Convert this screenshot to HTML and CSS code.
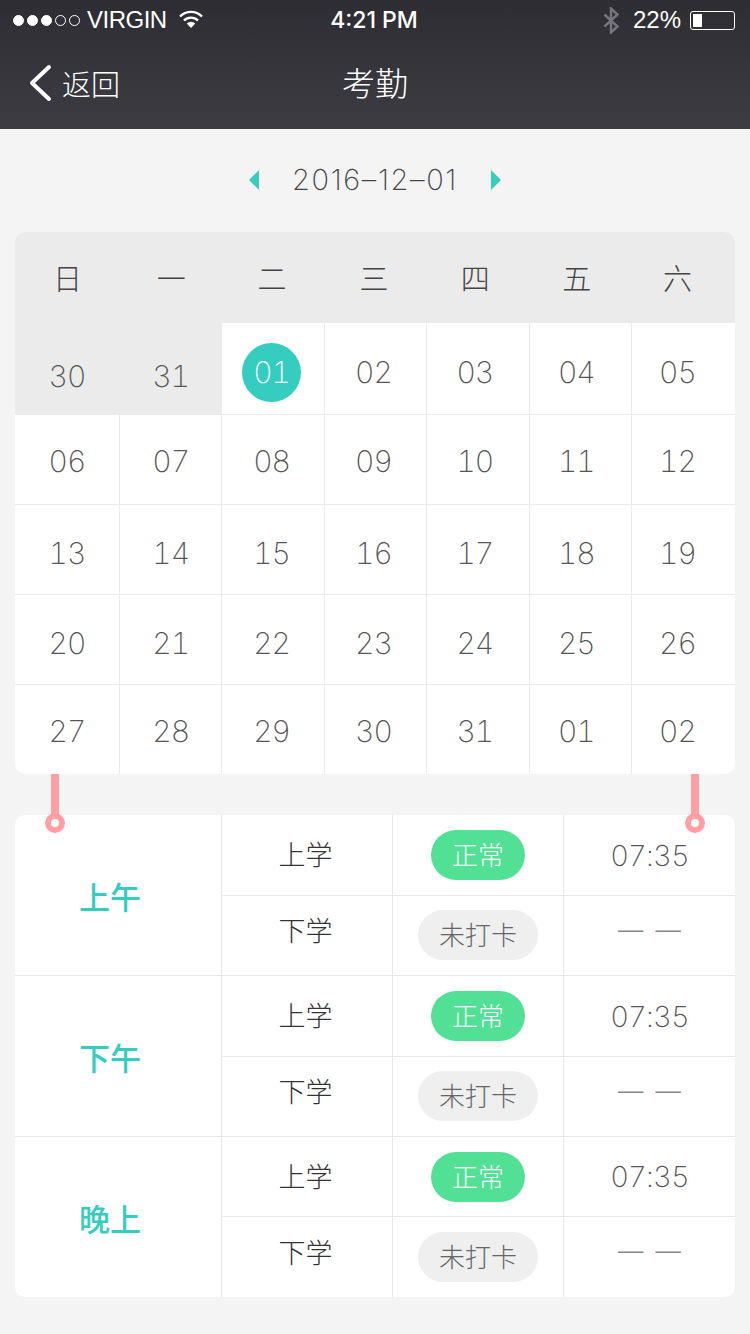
FILE: index.html
```html
<!DOCTYPE html>
<html lang="zh-CN">
<head>
    <meta charset="UTF-8">
    <meta name="viewport" content="width=device-width, initial-scale=1.0">
    <title>考勤</title>
    <link rel="stylesheet" href="styles.css">
</head>

<body>
    <header class="topbar">
        <div class="status">
            <div class="status-left">
                <span class="dot on"></span><span class="dot on"></span><span class="dot on"></span><span class="dot"></span><span class="dot"></span>
                <span class="carrier">VIRGIN</span>
                <svg class="wifi" width="24" height="18" viewBox="0 0 24 18">
                    <path d="M1 6.5a15.5 15.5 0 0 1 22 0" fill="none" stroke="#fff" stroke-width="2.4"/>
                    <path d="M5 10.5a10 10 0 0 1 14 0" fill="none" stroke="#fff" stroke-width="2.4"/>
                    <path d="M12 18l-4.2-4.6a6 6 0 0 1 8.4 0z" fill="#fff"/>
                </svg>
            </div>
            <div class="status-time">4:21 PM</div>
            <div class="status-right">
                <svg class="bluetooth" width="16" height="27" viewBox="0 0 16 27">
                    <path d="M1.5 7.5l13 12-6.5 6V1.5l6.5 6-13 12" fill="none" stroke="#77777b" stroke-width="2.4"/>
                </svg>
                <span class="percent">22%</span>
                <div class="battery"><div class="battery-level"></div></div>
            </div>
        </div>
        <div class="navbar">
            <div class="back">
                <svg width="24" height="38" viewBox="0 0 24 38">
                    <path d="M21 3L4 19l17 16" fill="none" stroke="#fff" stroke-width="4" stroke-linecap="round" stroke-linejoin="round"/>
                </svg>
                <span>返回</span>
            </div>
            <h1>考勤</h1>
        </div>
    </header>

    <main class="content">
        <div class="datepick">
            <span class="arrow arrow-left"></span>
            <span class="date">2016–12–01</span>
            <span class="arrow arrow-right"></span>
        </div>

        <section class="calendar">
            <div class="cal-head">
                <div>日</div><div>一</div><div>二</div><div>三</div><div>四</div><div>五</div><div>六</div>
            </div>
            <div class="cal-row first">
                <div class="day other">30</div>
                <div class="day other">31</div>
                <div class="day"><span class="today">01</span></div>
                <div class="day">02</div>
                <div class="day">03</div>
                <div class="day">04</div>
                <div class="day">05</div>
            </div>
            <div class="cal-row r2">
                <div class="day">06</div><div class="day">07</div><div class="day">08</div><div class="day">09</div><div class="day">10</div><div class="day">11</div><div class="day">12</div>
            </div>
            <div class="cal-row r3">
                <div class="day">13</div><div class="day">14</div><div class="day">15</div><div class="day">16</div><div class="day">17</div><div class="day">18</div><div class="day">19</div>
            </div>
            <div class="cal-row r3">
                <div class="day">20</div><div class="day">21</div><div class="day">22</div><div class="day">23</div><div class="day">24</div><div class="day">25</div><div class="day">26</div>
            </div>
            <div class="cal-row last">
                <div class="day">27</div><div class="day">28</div><div class="day">29</div><div class="day">30</div><div class="day">31</div><div class="day">01</div><div class="day">02</div>
            </div>
        </section>

        <section class="records">
            <span class="pin pin-left"></span>
            <span class="pin pin-right"></span>

            <div class="period">
                <div class="period-name">上午</div>
                <div class="entry upper">
                    <div class="kind">上学</div>
                    <div class="state"><span class="tag ok">正常</span></div>
                    <div class="clock">07:35</div>
                </div>
                <div class="entry lower">
                    <div class="kind">下学</div>
                    <div class="state"><span class="tag miss">未打卡</span></div>
                    <div class="clock none">— —</div>
                </div>
            </div>

            <div class="period">
                <div class="period-name">下午</div>
                <div class="entry upper">
                    <div class="kind">上学</div>
                    <div class="state"><span class="tag ok">正常</span></div>
                    <div class="clock">07:35</div>
                </div>
                <div class="entry lower">
                    <div class="kind">下学</div>
                    <div class="state"><span class="tag miss">未打卡</span></div>
                    <div class="clock none">— —</div>
                </div>
            </div>

            <div class="period">
                <div class="period-name">晚上</div>
                <div class="entry upper">
                    <div class="kind">上学</div>
                    <div class="state"><span class="tag ok">正常</span></div>
                    <div class="clock">07:35</div>
                </div>
                <div class="entry lower">
                    <div class="kind">下学</div>
                    <div class="state"><span class="tag miss">未打卡</span></div>
                    <div class="clock none">— —</div>
                </div>
            </div>
        </section>
    </main>
</body>

</html>
```

FILE: styles.css
```css
*, *::after {
    box-sizing: border-box;
}

html, body {
    margin: 0;
    padding: 0;
}

body {
    width: 750px;
    height: 1334px;
    overflow: hidden;
    background-color: #f4f4f4;
    font-family: "Liberation Sans", "Noto Sans CJK SC", sans-serif;
}

/* top bar */
.topbar {
    height: 129px;
    background: linear-gradient(#2e2d33, #3d3c42);
    color: #fff;
}

.status {
    height: 40px;
    padding: 0 15px 0 13px;
    display: grid;
    grid-template-columns: 1fr auto 1fr;
    align-items: center;
    font-size: 24px;
}

.status-left {
    display: flex;
    align-items: center;
    gap: 3px;
}

.dot {
    width: 11px;
    height: 11px;
    border-radius: 50%;
    border: 1px solid #fff;
}

.dot.on {
    background-color: #fff;
}

.carrier {
    margin-left: 4px;
    margin-right: 9px;
    letter-spacing: -0.5px;
}

.wifi {
    margin-top: -2px;
}

.status-time {
    font-family: Inter, sans-serif;
    font-weight: 500;
    font-size: 23px;
}

.status-right {
    display: flex;
    align-items: center;
    justify-content: flex-end;
}

.percent {
    margin-left: 14px;
    margin-right: 9px;
}

.battery {
    width: 45px;
    height: 19px;
    padding: 2px;
    border: 1px solid #fff;
    border-radius: 3px;
}

.battery-level {
    width: 9px;
    height: 100%;
    background-color: #fff;
}

.navbar {
    height: 89px;
    display: flex;
    align-items: center;
    justify-content: center;
    position: relative;
}

.back {
    position: absolute;
    left: 28px;
    top: 22px;
    display: flex;
    align-items: center;
    gap: 10px;
    font-size: 29px;
    font-weight: 300;
}

.navbar h1 {
    margin: 0 0 6px;
    font-size: 33px;
    font-weight: 300;
}

/* date */
.content {
    padding: 0 15px;
}

.datepick {
    height: 103px;
    padding-bottom: 2px;
    display: flex;
    align-items: center;
    justify-content: center;
    gap: 33px;
    color: #444;
}

.date {
    font-family: Inter, sans-serif;
    font-weight: 200;
    font-size: 29px;
    letter-spacing: 1.6px;
}

.arrow {
    width: 0;
    height: 0;
    border-top: 10px solid transparent;
    border-bottom: 10px solid transparent;
}

.arrow-left {
    border-right: 10px solid #34cdbf;
}

.arrow-right {
    border-left: 10px solid #34cdbf;
}

/* calendar */
.calendar {
    height: 542px;
    border-radius: 10px;
    overflow: hidden;
    background-color: #fff;
}

.cal-head, .cal-row {
    display: grid;
    grid-template-columns: 105px repeat(5, 102.4px) 1fr;
}

.cal-head {
    height: 91px;
    padding-bottom: 1px;
    background-color: #ebebeb;
    align-items: center;
    text-align: center;
    font-size: 29px;
    font-weight: 300;
    color: #444;
}

/* the labels sit a bit left of the cell middle, more so towards the right */
.cal-head div:nth-child(3), .day:nth-child(3) { padding-right: 3px; }
.cal-head div:nth-child(4), .day:nth-child(4) { padding-right: 4px; }
.cal-head div:nth-child(5), .day:nth-child(5) { padding-right: 6px; }
.cal-head div:nth-child(6), .day:nth-child(6) { padding-right: 8px; }
.cal-head div:nth-child(7), .day:nth-child(7) { padding-right: 12px; }

.cal-row {
    height: 90px;
}

.cal-row.first {
    height: 92px;
}

.day {
    display: flex;
    align-items: center;
    justify-content: center;
    border-right: 1px solid #ebebeb;
    border-bottom: 1px solid #ebebeb;
    font-family: Inter, sans-serif;
    font-weight: 200;
    font-size: 30px;
    font-variant-numeric: tabular-nums;
    letter-spacing: -1px;
    color: #555;
}

.day:last-child {
    border-right: none;
}

.first .day {
    padding-top: 7px;
}

.first .day.other {
    background-color: #ebebeb;
    padding-top: 14px;
}

.r2 .day {
    padding-top: 3px;
}

.r3 .day {
    padding-top: 7px;
}

.last .day {
    padding-top: 1px;
    border-bottom: none;
}

.today {
    width: 59px;
    height: 59px;
    border-radius: 50%;
    background-color: #34cdbf;
    color: #fff;
    display: flex;
    align-items: center;
    justify-content: center;
}

/* records */
.records {
    position: relative;
    margin-top: 41px;
    height: 482px;
    border-radius: 10px;
    background-color: #fff;
}

.pin {
    position: absolute;
    top: -41px;
    width: 8px;
    height: 41px;
    background-color: #ff9fa4;
}

.pin::after {
    content: "";
    position: absolute;
    left: -6px;
    top: 39px;
    width: 20px;
    height: 20px;
    border-radius: 50%;
    border: 6.5px solid #ff9fa4;
    background-color: #fff;
}

.pin-left {
    left: 36px;
}

.pin-right {
    right: 36px;
}

.period {
    height: 161px;
    display: grid;
    grid-template-columns: 207px 171px 171px 171px;
    grid-template-rows: 81px 1fr;
    border-bottom: 1px solid #e8e8e8;
}

.period:last-of-type {
    height: 160px;
    grid-template-rows: 80px 1fr;
    border-bottom: none;
}

.period-name {
    grid-row: 1 / 3;
    display: flex;
    align-items: center;
    justify-content: center;
    padding-right: 16px;
    border-right: 1px solid #e8e8e8;
    color: #34cdbf;
    font-size: 31px;
    font-weight: 500;
}

.entry {
    display: contents;
}

.kind, .state, .clock {
    display: flex;
    align-items: center;
    justify-content: center;
    border-right: 1px solid #e8e8e8;
}

.upper .kind, .upper .state, .upper .clock {
    border-bottom: 1px solid #e8e8e8;
}

.clock {
    border-right: none;
    font-family: Inter, sans-serif;
    font-weight: 200;
    font-size: 29px;
    font-variant-numeric: tabular-nums;
    letter-spacing: -0.8px;
    color: #555;
}

.clock.none {
    font-family: "Noto Sans CJK SC", sans-serif;
    font-size: 32px;
    letter-spacing: 0;
    word-spacing: 2px;
    color: #888;
}

.kind {
    padding-right: 3px;
    font-size: 27px;
    font-weight: 300;
    color: #333;
}

.upper .kind {
    padding-bottom: 3px;
}

.lower .kind {
    padding-bottom: 12px;
}

.lower .state {
    padding-bottom: 1px;
}

.lower .clock {
    padding-bottom: 20px;
}

.tag {
    height: 50px;
    padding-bottom: 3px;
    border-radius: 25px;
    display: flex;
    align-items: center;
    justify-content: center;
    font-size: 26px;
    font-weight: 300;
}

.tag.ok {
    width: 94px;
    background-color: #52e194;
    color: #fff;
}

.tag.miss {
    width: 120px;
    background-color: #efefef;
    color: #666;
}
```
